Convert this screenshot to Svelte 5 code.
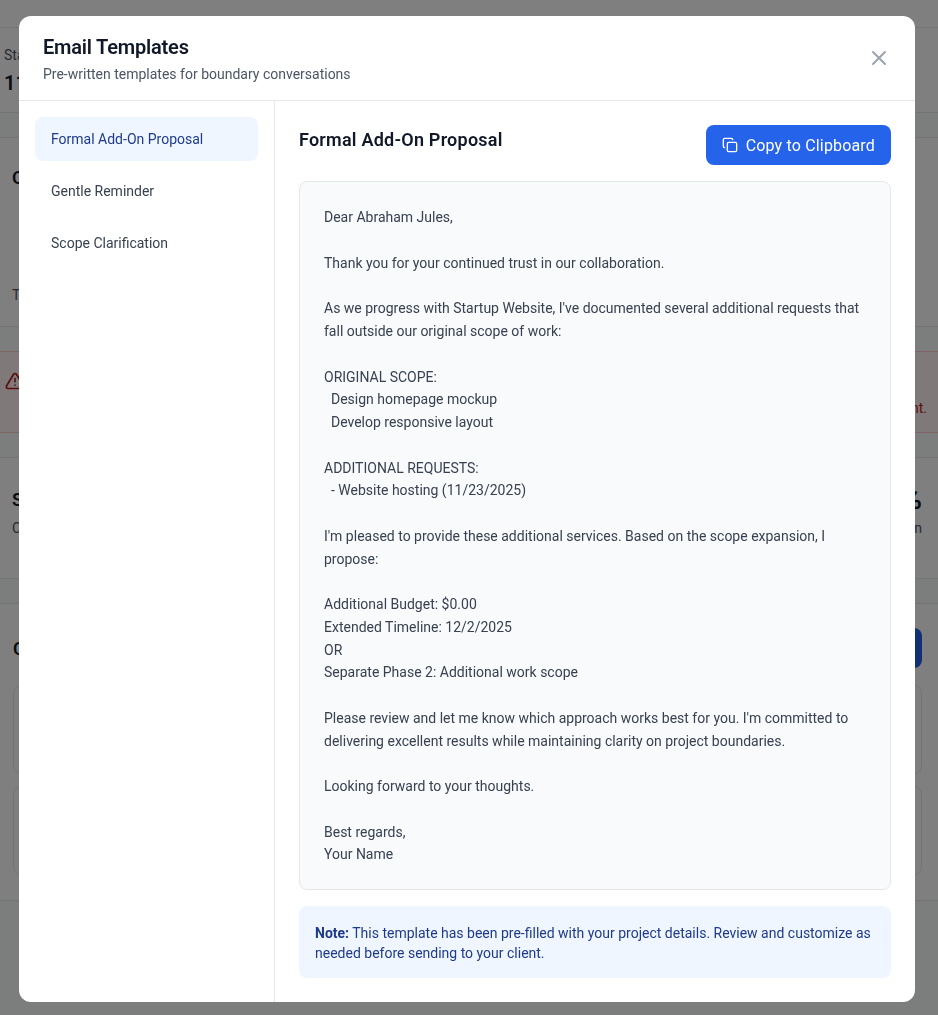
<script>
  let templates = ["Formal Add-On Proposal", "Gentle Reminder", "Scope Clarification"];
  let active = $state(0);

  const body = `Dear Abraham Jules,

Thank you for your continued trust in our collaboration.

As we progress with Startup Website, I've documented several additional requests that fall outside our original scope of work:

ORIGINAL SCOPE:
  Design homepage mockup
  Develop responsive layout

ADDITIONAL REQUESTS:
  - Website hosting (11/23/2025)

I'm pleased to provide these additional services. Based on the scope expansion, I propose:

Additional Budget: $0.00
Extended Timeline: 12/2/2025
OR
Separate Phase 2: Additional work scope

Please review and let me know which approach works best for you. I'm committed to delivering excellent results while maintaining clarity on project boundaries.

Looking forward to your thoughts.

Best regards,
Your Name`;
</script>

<div class="page">
  <div class="top-bar"></div>
  <div class="stats">
    <div class="stat-label">Start</div>
    <div class="stat-value">11/23/2025</div>
  </div>
  <div class="gap-strip"></div>
  <section class="overview">
    <h2>Overview</h2>
    <p class="overview-foot">Timeline</p>
  </section>
  <div class="alert-wrap">
    <div class="alert">
      <svg class="alert-icon" viewBox="0 0 24 24" fill="none" stroke="currentColor" stroke-width="2" stroke-linecap="round" stroke-linejoin="round">
        <path d="M10.3 3.9 1.8 18a2 2 0 0 0 1.7 3h17a2 2 0 0 0 1.7-3L13.7 3.9a2 2 0 0 0-3.4 0z" />
        <path d="M12 9v4M12 17h.01" />
      </svg>
      <span class="alert-text">This project has exceeded the agreed scope and needs a follow-up agreement.</span>
    </div>
  </div>
  <section class="scope">
    <div>
      <h2>Scope</h2>
      <p>Current</p>
    </div>
    <div class="scope-right">
      <strong>0%</strong>
      <p>Expansion</p>
    </div>
  </section>
  <div class="gap-strip"></div>
  <section class="changes">
    <div class="changes-head">
      <h2>Change Log</h2>
      <div class="add-btn">Add Request</div>
    </div>
    <div class="change-card"></div>
    <div class="change-card"></div>
  </section>
</div>

<div class="overlay">
  <div class="modal">
    <header class="modal-head">
      <div>
        <h1>Email Templates</h1>
        <p>Pre-written templates for boundary conversations</p>
      </div>
      <button class="close" aria-label="Close">
        <svg viewBox="0 0 24 24" fill="none" stroke="currentColor" stroke-width="2" stroke-linecap="round" stroke-linejoin="round">
          <path d="M6 6l12 12M18 6 6 18" />
        </svg>
      </button>
    </header>
    <div class="modal-body">
      <nav class="side">
        {#each templates as name, i}
          <button class="side-item {active == i ? 'selected' : ''}" onclick={() => (active = i)}>{name}</button>
        {/each}
      </nav>
      <main class="content">
        <div class="content-head">
          <h2>{templates[active]}</h2>
          <button class="copy">
            <svg viewBox="0 0 24 24" fill="none" stroke="currentColor" stroke-width="2" stroke-linecap="round" stroke-linejoin="round">
              <rect x="8" y="8" width="14" height="14" rx="2" />
              <path d="M4 16c-1.1 0-2-.9-2-2V4c0-1.1.9-2 2-2h10c1.1 0 2 .9 2 2" />
            </svg>
            Copy to Clipboard
          </button>
        </div>
        <pre class="letter">{body}</pre>
        <div class="note">
          <strong>Note:</strong> This template has been pre-filled with your project details. Review and customize as needed before sending to your client.
        </div>
      </main>
    </div>
  </div>
</div>

<style>
  :global(body) {
    font-family: Roboto, "Noto Sans", sans-serif;
    background: #f9fafb;
    overflow: hidden;
  }

  .page {
    height: 1015px;
    overflow: hidden;
    color: #111827;
  }

  .top-bar {
    height: 28px;
    background: #fff;
    border-bottom: 1px solid #e5e7eb;
    box-sizing: border-box;
  }

  .stats {
    height: 85px;
    padding: 17px 12px 0 4px;
    background: #fff;
    border-bottom: 1px solid #e5e7eb;
    box-sizing: border-box;
  }

  .stat-label {
    font-size: 14px;
    line-height: 20px;
    color: #4b5563;
  }

  .stat-value {
    margin-top: 4px;
    font-size: 20px;
    line-height: 28px;
    font-weight: 600;
  }

  .gap-strip {
    height: 25px;
    border-bottom: 1px solid #e5e7eb;
    box-sizing: border-box;
  }

  .overview {
    height: 189px;
    padding: 26px 12px 0;
    background: #fff;
    border-bottom: 1px solid #e5e7eb;
    box-sizing: border-box;
  }

  h2 {
    margin: 0;
    font-size: 18px;
    line-height: 28px;
    font-weight: 600;
  }

  .overview-foot {
    margin: 93px 0 0;
    font-size: 14px;
    line-height: 20px;
    color: #4b5563;
  }

  .alert-wrap {
    height: 131px;
    padding-top: 24px;
    border-bottom: 1px solid #e5e7eb;
    box-sizing: border-box;
  }

  .alert {
    height: 82px;
    padding: 19px 11px 14px 5px;
    display: flex;
    justify-content: space-between;
    background: #fef2f2;
    border-top: 1px solid #fecaca;
    border-bottom: 1px solid #fecaca;
    box-sizing: border-box;
    color: #b91c1c;
  }

  .alert-icon {
    width: 20px;
    height: 20px;
  }

  .alert-text {
    align-self: flex-end;
    font-size: 14px;
    line-height: 20px;
    white-space: nowrap;
  }

  .scope {
    height: 121px;
    padding: 28px 16px 0 12px;
    display: flex;
    justify-content: space-between;
    background: #fff;
    border-bottom: 1px solid #e5e7eb;
    box-sizing: border-box;
  }

  .scope p {
    margin: 4px 0 0;
    font-size: 14px;
    line-height: 20px;
    color: #4b5563;
  }

  .scope-right {
    text-align: right;
  }

  .scope-right strong {
    display: block;
    font-size: 28px;
    line-height: 28px;
  }

  .changes {
    padding: 24px 16px 24px 13px;
    height: 297px;
    background: #fff;
    border-bottom: 1px solid #e5e7eb;
    box-sizing: border-box;
  }

  .changes-head {
    display: flex;
    justify-content: space-between;
    align-items: center;
    margin-bottom: 17px;
  }

  .changes-head h2 {
    padding-top: 1px;
  }

  .add-btn {
    height: 40px;
    padding: 0 16px;
    line-height: 40px;
    background: #2563eb;
    color: #fff;
    border-radius: 8px;
    font-size: 14px;
  }

  .change-card {
    height: 89px;
    margin-bottom: 12px;
    border: 1px solid #e5e7eb;
    border-radius: 8px;
    box-sizing: border-box;
  }

  .overlay {
    position: fixed;
    inset: 0;
    padding: 16px 4px 0 0;
    display: flex;
    align-items: flex-start;
    justify-content: center;
    background: rgba(0, 0, 0, 0.5);
  }

  .modal {
    width: 896px;
    height: 986px;
    display: flex;
    flex-direction: column;
    background: #fff;
    border-radius: 12px;
    overflow: hidden;
  }

  .modal-head {
    height: 85px;
    flex: none;
    padding: 0 24px;
    display: flex;
    align-items: center;
    justify-content: space-between;
    border-bottom: 1px solid #e5e7eb;
    box-sizing: border-box;
  }

  h1 {
    margin: 0;
    padding-top: 1px;
    font-size: 20px;
    line-height: 28px;
    font-weight: 600;
    letter-spacing: -0.2px;
    color: #111827;
  }

  .modal-head p {
    margin: 3px 0 0;
    font-size: 14px;
    line-height: 20px;
    color: #4b5563;
  }

  .close {
    width: 24px;
    height: 24px;
    padding: 0;
    border: 0;
    background: none;
    color: #9ca3af;
    cursor: pointer;
  }

  .close svg {
    display: block;
    width: 24px;
    height: 24px;
  }

  .modal-body {
    flex: 1;
    min-height: 0;
    display: flex;
  }

  .side {
    width: 256px;
    flex: none;
    padding: 16px;
    display: flex;
    flex-direction: column;
    gap: 8px;
    border-right: 1px solid #e5e7eb;
    box-sizing: border-box;
  }

  .side-item {
    height: 44px;
    padding: 0 16px;
    border: 0;
    border-radius: 8px;
    background: none;
    text-align: left;
    font-family: inherit;
    font-size: 14px;
    color: #374151;
    cursor: pointer;
  }

  .side-item.selected {
    background: #eff6ff;
    color: #1e3a8a;
  }

  .content {
    flex: 1;
    min-width: 0;
    padding: 24px;
    box-sizing: border-box;
  }

  .content-head {
    display: flex;
    justify-content: space-between;
    align-items: flex-start;
    margin-bottom: 16px;
  }

  .content-head h2 {
    padding-top: 1px;
    letter-spacing: 0.23px;
    color: #111827;
  }

  .copy {
    height: 40px;
    padding: 0 16px;
    display: flex;
    align-items: center;
    gap: 8px;
    border: 0;
    border-radius: 8px;
    background: #2563eb;
    color: #fff;
    font-family: inherit;
    font-size: 16px;
    letter-spacing: 0.17px;
    cursor: pointer;
  }

  .copy svg {
    width: 16px;
    height: 16px;
  }

  .letter {
    margin: 0 0 16px;
    padding: 24.25px 24px 24px;
    height: 709px;
    background: #f9fafb;
    border: 1px solid #e5e7eb;
    border-radius: 8px;
    box-sizing: border-box;
    font-family: inherit;
    font-size: 14px;
    line-height: 22.75px;
    white-space: pre-wrap;
    color: #374151;
  }

  .note {
    padding: 17px 16px 15px;
    background: #eff6ff;
    border-radius: 8px;
    font-size: 14px;
    line-height: 20px;
    color: #1e3a8a;
  }
</style>
